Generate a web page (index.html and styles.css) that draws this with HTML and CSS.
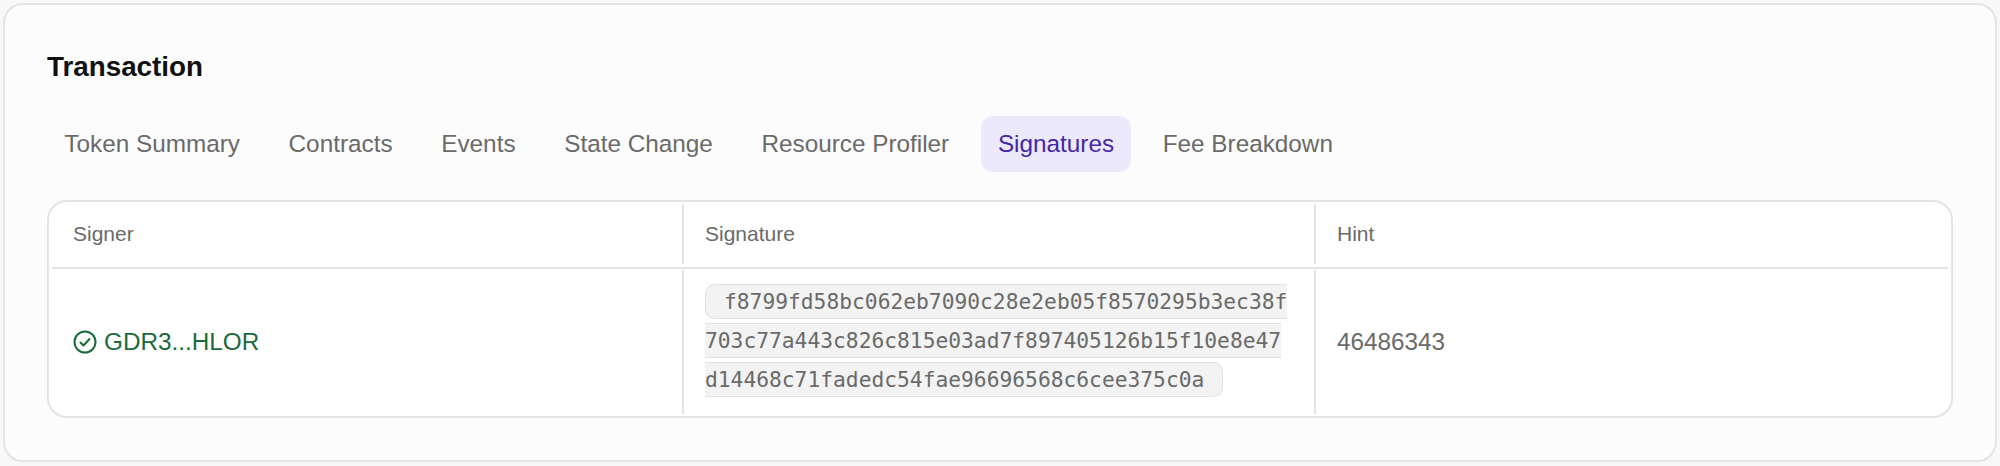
FILE: index.html
```html
<!DOCTYPE html>
<html lang="en">
<head>
  <meta charset="UTF-8">
  <title>Transaction</title>
  <link rel="stylesheet" href="styles.css">
</head>
<body>

<section class="card">
  <h2 class="card-title">Transaction</h2>

  <nav class="tabs">
    <a class="tab">Token Summary</a>
    <a class="tab">Contracts</a>
    <a class="tab">Events</a>
    <a class="tab">State Change</a>
    <a class="tab">Resource Profiler</a>
    <a class="tab tab-active">Signatures</a>
    <a class="tab">Fee Breakdown</a>
  </nav>

  <div class="table-wrap">
    <div class="row row-head">
      <div class="cell">Signer</div>
      <div class="cell">Signature</div>
      <div class="cell">Hint</div>
    </div>
    <div class="row row-body">
      <div class="cell">
        <span class="signer">
          <svg class="signer-icon" viewBox="0 0 24 24" fill="none" stroke="currentColor" stroke-width="2" stroke-linecap="round" stroke-linejoin="round">
            <circle cx="12" cy="12" r="10.5"></circle>
            <path d="M7.5 12.5l3 3 6-6.5"></path>
          </svg>
          GDR3...HLOR
        </span>
      </div>
      <div class="cell cell-sig">
        <div><code class="sig">f8799fd58bc062eb7090c28e2eb05f8570295b3ec38f703c77a443c826c815e03ad7f897405126b15f10e8e47d14468c71fadedc54fae96696568c6cee375c0a</code></div>
      </div>
      <div class="cell">46486343</div>
    </div>
  </div>
</section>

</body>
</html>
```

FILE: styles.css
```css
body {
  font-family: "Liberation Sans", Arial, sans-serif;
  margin: 0;
  padding: 3px;
  box-sizing: border-box;
  background-color: #f8f8f8;
  color: #6a6a6a;
}

.card {
  background-color: #fcfcfc;
  border: 2px solid #e4e4e4;
  border-radius: 20px;
  padding: 42px;
  height: 459px;
  box-sizing: border-box;
}

.card-title {
  margin: 0 0 29px;
  font-size: 27.8px;
  line-height: 40px;
  font-weight: bold;
  color: #111;
}

.tabs {
  display: flex;
  gap: 14px;
  margin-bottom: 28px;
}

.tab {
  padding: 0 17.35px;
  height: 56px;
  line-height: 56px;
  font-size: 24.3px;
  border-radius: 12px;
}

.tab-active {
  background-color: #ece9fc;
  color: #4527a8;
}

.table-wrap {
  background-color: #fff;
  border: 2px solid #e4e4e4;
  border-radius: 20px;
  padding: 2px 3px;
}

.row {
  display: grid;
  grid-template-columns: repeat(3, 1fr);
}

.row-head {
  padding-bottom: 3px;
  margin-bottom: 1px;
  border-bottom: 2px solid #e4e4e4;
}

.cell {
  display: flex;
  align-items: center;
  padding: 0 21px;
  box-sizing: border-box;
  border-right: 2px solid #e4e4e4;
  font-size: 24.3px;
}

.cell:last-child {
  border-right: none;
}

.row-head .cell {
  height: 60px;
  font-size: 21px;
}

.row-body .cell {
  height: 144px;
}

.cell-sig {
  padding-right: 23px;
  padding-bottom: 3px;
}

.signer {
  display: flex;
  align-items: center;
  gap: 7px;
  color: #1a6b3c;
}

.signer-icon {
  width: 24px;
  height: 24px;
}

.sig {
  font-family: "DejaVu Sans Mono", monospace;
  font-size: 21.27px;
  line-height: 39px;
  padding: 4px 18px;
  background-color: #f3f3f3;
  border: 1px solid #e2e2e2;
  border-radius: 10px;
  word-break: break-all;
}
```
